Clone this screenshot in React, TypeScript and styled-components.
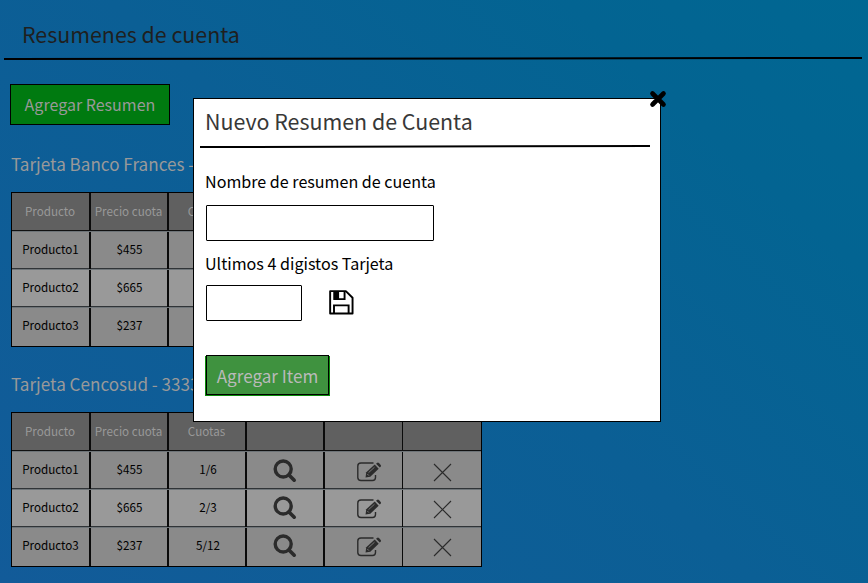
import React from "react";
import styled, { createGlobalStyle } from "styled-components";

const GlobalStyle = createGlobalStyle`
  * { box-sizing: border-box; }
  body { margin: 0; overflow: hidden; }
`;

const Page = styled.main`
  position: relative;
  width: 868px;
  height: 583px;
  overflow: hidden;
  background: linear-gradient(42deg, #125b99 0%, #0b5f95 50%, #036492 80%, #006792 100%);
  font-family: "Noto Sans CJK SC", "Noto Sans", sans-serif;
  color: #000;
`;

const PageHeader = styled.header`
  height: 60px;
  margin: 0 6px 0 4px;
  padding: 16px 0 0 18px;
`;

const PageTitle = styled.h1`
  margin: 0;
  font-size: 21.4px;
  font-weight: 400;
  line-height: 36px;
  color: #1f1f1f;
  white-space: nowrap;
`;

const Rule = styled.svg`
  display: block;
  overflow: visible;
`;

const HeaderRule = styled(Rule)`
  margin: 5px 0 0 -18px;
`;

const Content = styled.div`
  padding: 24px 0 0 10px;
`;

const Button = styled.button<{ $modal?: boolean }>`
  display: block;
  width: ${(p) => (p.$modal ? 123 : 160)}px;
  height: ${(p) => (p.$modal ? 40 : 41)}px;
  padding: 0;
  border: 1px solid #000;
  background: ${(p) => (p.$modal ? "#3f923f" : "#007a10")};
  box-shadow: ${(p) => (p.$modal ? "-1px 1px 0 #0a8a0a, 1px 1px 0 #0a8a0a" : "none")};
  color: ${(p) => (p.$modal ? "#bababa" : "#999")};
  font: 400 ${(p) => (p.$modal ? 17.1 : 16.05)}px/37px "Noto Sans CJK SC", sans-serif;
  white-space: nowrap;
`;

const Card = styled.section<{ $gap: number }>`
  margin-top: ${(p) => p.$gap}px;
  padding-left: 1px;
`;

const CardTitle = styled.h2`
  margin: 0 0 14px;
  height: 28px;
  font-size: 17.1px;
  font-weight: 400;
  line-height: 27px;
  color: #999;
  white-space: nowrap;
`;

const Table = styled.div`
  width: 471px;
  height: 155px;
  border: 1px solid #000;
  display: grid;
  grid-template-rows: 38px 38px 38px 39px;
`;

const Row = styled.div<{ $tone: string; $head?: boolean }>`
  display: grid;
  grid-template-rows: 37px;
  grid-template-columns: 79px repeat(5, 78px);
  background: ${(p) => p.$tone};
  color: ${(p) => (p.$head ? "#999" : "#000")};
  font-size: 11.65px;
  box-shadow: inset 0 -1px 0 ${(p) => (p.$head ? "#111" : "#303437")};
  &:not(:first-child) { border-top: 1px solid #6e7478; }
  &:last-child { box-shadow: none; grid-template-rows: 38px; }
`;

const Cell = styled.div<{ $line: number; $nudge?: number }>`
  display: flex;
  align-items: flex-start;
  justify-content: center;
  border-right: ${(p) => p.$line}px solid #0a0a0a;
  padding-left: ${(p) => p.$nudge ?? 0}px;
  line-height: 34px;
  white-space: nowrap;
`;

const HeadCell = styled(Cell)`
  padding-right: 1px;
  line-height: 35px;
`;

const Icon = styled.svg<{ $shift?: number }>`
  display: block;
  flex: none;
  margin-top: ${(p) => p.$shift ?? 0}px;
`;

const Modal = styled.section`
  position: absolute;
  left: 193px;
  top: 98px;
  width: 468px;
  height: 324px;
  padding: 5px 10px 0 6px;
  border: 1px solid #000;
  background: #fff;
`;

const ModalTitle = styled.h2`
  margin: 0 0 7px 5px;
  font-size: 21.4px;
  font-weight: 400;
  line-height: 34px;
  color: #383838;
  white-space: nowrap;
`;

const Form = styled.div`
  padding: 20px 0 0 6px;
`;

const Label = styled.label`
  display: block;
  height: 26px;
  margin-left: -1px;
  font-size: 16.1px;
  line-height: 26px;
  white-space: nowrap;
`;

const Input = styled.input<{ $width: number }>`
  display: block;
  width: ${(p) => p.$width}px;
  height: 36px;
  border: 1px solid #000;
  border-radius: 1px;
  background: #fff;
`;

const Field = styled.div<{ $gap: number }>`
  display: flex;
  flex-direction: column;
  gap: ${(p) => p.$gap}px;
  margin-bottom: 9px;
`;

const InputLine = styled.div`
  display: flex;
  gap: 27px;
  margin-bottom: 25px;
`;

const CloseIcon = styled.svg`
  position: absolute;
  left: 455px;
  top: -9px;
`;

const SearchIcon = ({ top }: { top: number }) => (
  <Icon width="24" height="24" viewBox="0 0 24 24" fill="none" stroke="#2b2b2b" $shift={top}>
    <circle cx="10.2" cy="10" r="8" strokeWidth="3.4" />
    <path d="M16 16l5.2 5.2" strokeWidth="3.6" strokeLinecap="round" />
  </Icon>
);

const EditIcon = ({ top }: { top: number }) => (
  <Icon width="26" height="22" viewBox="0 0 26 22" fill="none" stroke="#2b2b2b" $shift={top}>
    <path d="M17.5 2H5Q1.8 2 1.8 5v11.5q0 3 3.2 3h11.5q3 0 3-3V14" strokeWidth="1.4" />
    <path d="M9.5 16.5l.8-5.3L18.7 3.5l4 4.2-8.4 8z" fill="#2b2b2b" stroke="none" />
    <path d="M20 2.8l1-.9q1-.7 2 .2l1.7 1.8q.8 1-.1 1.8l-.8.8z" fill="#2b2b2b" stroke="none" />
    <path d="M12.5 11.7l6-5.5M11.3 13l1.6 1.6" stroke="#8a8a8a" strokeWidth=".8" />
  </Icon>
);

const RemoveIcon = ({ top }: { top: number }) => (
  <Icon width="19" height="19" viewBox="0 0 19 19" $shift={top}>
    <path d="M1 1l17 17M18 1L1 18" stroke="#2b2b2b" strokeWidth="1.1" />
  </Icon>
);

const SaveIcon = () => (
  <Icon width="25" height="25" viewBox="0 0 26 26" fill="none" stroke="#000" strokeWidth="2" $shift={5}>
    <path d="M1.2 1.2H17.5L24.5 8v16.5H1.2z" strokeLinejoin="round" />
    <path d="M5.5 1v8.5h10.7V1M5.2 24v-8h15.2v8" />
    <path d="M5 1h5.5v9H5z" fill="#000" stroke="none" />
  </Icon>
);

const products = [
  ["Producto1", "$455", "1/6"],
  ["Producto2", "$665", "2/3"],
  ["Producto3", "$237", "5/12"],
];

const ProductTable = () => (
  <Table>
    <Row $tone="#606060" $head>
      <HeadCell $line={2}>Producto</HeadCell>
      <HeadCell $line={2}>Precio cuota</HeadCell>
      <HeadCell $line={2}>Cuotas</HeadCell>
      <HeadCell $line={2} />
      <HeadCell $line={1} />
      <HeadCell $line={0} />
    </Row>
    {products.map(([name, price, fee], i) => {
      const lift = i === 0 ? 0 : 1;
      return (
        <Row key={name} $tone={i === 1 ? "#999" : "#8a8a8a"}>
          <Cell $line={2}>{name}</Cell>
          <Cell $line={2} $nudge={1}>{price}</Cell>
          <Cell $line={2} $nudge={2}>{fee}</Cell>
          <Cell $line={2}><SearchIcon top={7 - lift} /></Cell>
          <Cell $line={1} $nudge={11}><EditIcon top={9 - lift} /></Cell>
          <Cell $line={0} $nudge={1}><RemoveIcon top={11 - lift} /></Cell>
        </Row>
      );
    })}
  </Table>
);

export default function App() {
  return (
    <>
      <GlobalStyle />
      <Page>
        <PageHeader>
          <PageTitle>Resumenes de cuenta</PageTitle>
          <HeaderRule width="858" height="3">
            <path d="M0 2L858 1" stroke="#000" strokeWidth="2" />
          </HeaderRule>
        </PageHeader>
        <Content>
          <Button>Agregar Resumen</Button>
          <Card $gap={25}>
            <CardTitle>Tarjeta Banco Frances - 2222</CardTitle>
            <ProductTable />
          </Card>
          <Card $gap={23}>
            <CardTitle>Tarjeta Cencosud - 3333</CardTitle>
            <ProductTable />
          </Card>
        </Content>
        <Modal>
          <CloseIcon width="18" height="18" viewBox="0 0 18 18">
            <path d="M3.5 3.5l11 11M14.5 3.5l-11 11" stroke="#000" strokeWidth="4.6" strokeLinecap="round" />
          </CloseIcon>
          <ModalTitle>Nuevo Resumen de Cuenta</ModalTitle>
          <Rule width="450" height="3">
            <path d="M0 2L450 1" stroke="#000" strokeWidth="2" />
          </Rule>
          <Form>
            <Field $gap={11}>
              <Label htmlFor="nombre">Nombre de resumen de cuenta</Label>
              <Input id="nombre" $width={228} />
            </Field>
            <Field $gap={9}>
              <Label htmlFor="digitos">Ultimos 4 digistos Tarjeta</Label>
              <InputLine>
                <Input id="digitos" $width={96} />
                <SaveIcon />
              </InputLine>
            </Field>
            <Button $modal>Agregar Item</Button>
          </Form>
        </Modal>
      </Page>
    </>
  );
}
